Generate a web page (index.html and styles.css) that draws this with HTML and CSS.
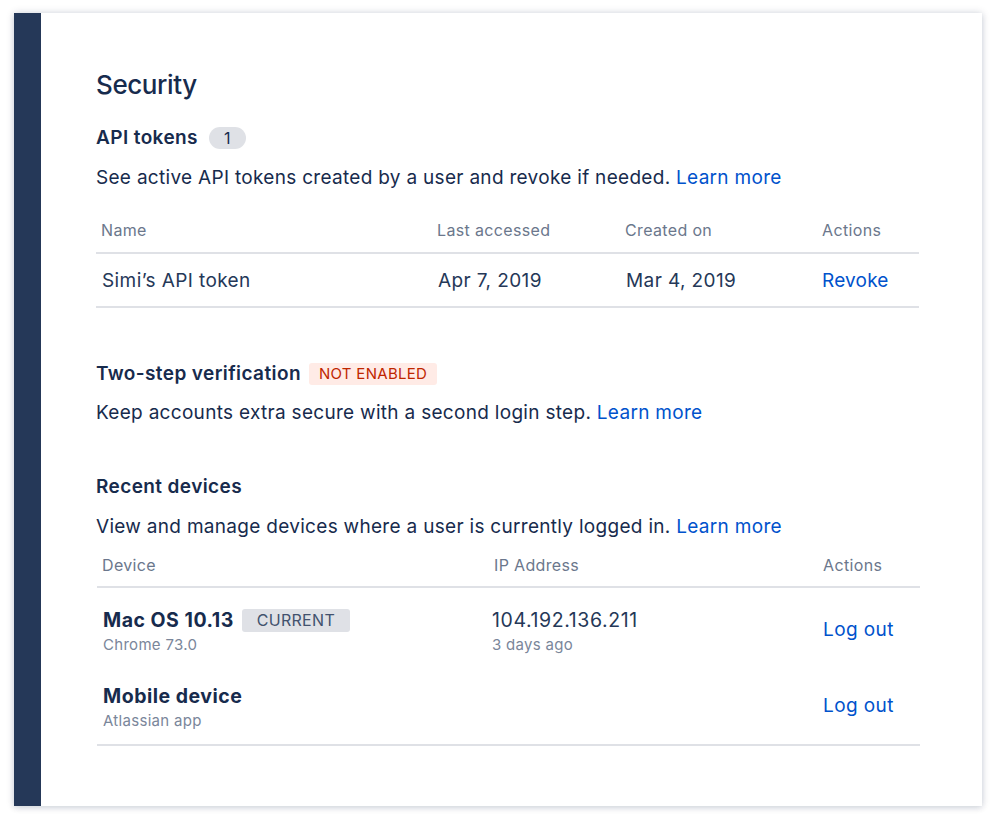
FILE: index.html
```html
<!DOCTYPE html>
<html lang="en">
<head>
<meta charset="utf-8">
<title>Security</title>
<link rel="stylesheet" href="styles.css">
</head>
<body>
<div class="frame">
  <div class="nav"></div>
  <main class="content">
    <h1 class="title">Security</h1>

    <section class="section">
      <h2 class="heading">API tokens <span class="badge">1</span></h2>
      <p class="desc">See active API tokens created by a user and revoke if needed. <a class="link" href="#">Learn more</a></p>
      <div class="table tokens">
        <div class="th">Name</div>
        <div class="th">Last accessed</div>
        <div class="th">Created on</div>
        <div class="th">Actions</div>
        <div class="td">Simi’s API token</div>
        <div class="td">Apr 7, 2019</div>
        <div class="td">Mar 4, 2019</div>
        <div class="td"><a class="link" href="#">Revoke</a></div>
      </div>
    </section>

    <section class="section two-step">
      <h2 class="heading">Two-step verification <span class="lozenge danger">NOT ENABLED</span></h2>
      <p class="desc">Keep accounts extra secure with a second login step. <a class="link" href="#">Learn more</a></p>
    </section>

    <section class="section devices-section">
      <h2 class="heading">Recent devices</h2>
      <p class="desc">View and manage devices where a user is currently logged in. <a class="link" href="#">Learn more</a></p>
      <div class="devices">
        <div class="dhead">
          <div class="th">Device</div>
          <div class="th">IP Address</div>
          <div class="th">Actions</div>
        </div>
        <div class="dbody">
          <div class="drow first">
            <div class="dcell">
              <div class="dname">Mac OS 10.13 <span class="lozenge neutral">CURRENT</span></div>
              <div class="dsub">Chrome 73.0</div>
            </div>
            <div class="dcell ipcell">
              <div class="dip">104.192.136.211</div>
              <div class="dsub">3 days ago</div>
            </div>
            <div class="dcell action"><a class="link" href="#">Log out</a></div>
          </div>
          <div class="drow last">
            <div class="dcell">
              <div class="dname">Mobile device</div>
              <div class="dsub">Atlassian app</div>
            </div>
            <div class="dcell"></div>
            <div class="dcell action"><a class="link" href="#">Log out</a></div>
          </div>
        </div>
      </div>
    </section>
  </main>
</div>
</body>
</html>
```

FILE: styles.css
```css
* { box-sizing: border-box; }
html, body { margin: 0; padding: 0; background: #ffffff; }
body {
  font-family: "Inter", "Liberation Sans", sans-serif;
  color: #172b4d;
  width: 999px;
  height: 823px;
  overflow: hidden;
}
.frame {
  margin: 13px 0 0 14px;
  width: 968px;
  height: 793px;
  display: flex;
  background: #ffffff;
  box-shadow: 0 0 8px rgba(9, 30, 66, 0.16), 0 2px 6px rgba(9, 30, 66, 0.10);
}
.nav {
  width: 27px;
  flex: none;
  background: #253858;
}
.content {
  flex: 1;
  padding: 55px 0 0 55px;
  letter-spacing: 0.3px;
}
.title {
  margin: 0;
  font-size: 26px;
  line-height: 33px;
  font-weight: 500;
  letter-spacing: -0.4px;
}
.heading {
  margin: 25px 0 0;
  font-size: 19px;
  line-height: 24px;
  font-weight: 600;
  letter-spacing: 0.4px;
  display: flex;
  align-items: center;
  gap: 8px;
}
.badge {
  display: inline-block;
  background: #dfe1e6;
  color: #172b4d;
  font-weight: 400;
  font-size: 16px;
  line-height: 22px;
  height: 22px;
  min-width: 37px;
  padding: 0 8px;
  border-radius: 11px;
  text-align: center;
  margin-left: 3px;
}
.desc {
  margin: 16px 0 0;
  font-size: 19px;
  line-height: 24px;
  font-weight: 400;
  letter-spacing: 0.3px;
}
.link {
  color: #0052cc;
  text-decoration: none;
}
.table.tokens {
  width: 823px;
  margin-top: 30px;
  display: grid;
  grid-template-columns: 336px 188px 197px 1fr;
}
.th {
  font-size: 16px;
  line-height: 20px;
  color: #6b778c;
  padding: 0 5px 12px;
  border-bottom: 2px solid #dfe1e6;
  letter-spacing: 0.35px;
}
.td {
  font-size: 19px;
  line-height: 24px;
  padding: 15px 6px 13px;
  border-bottom: 2px solid #dfe1e6;
  color: #172b4d;
  letter-spacing: 0.4px;
}
.tokens .td { color: #253858; }
.tokens .td:first-child { color: #172b4d; }
.tokens .td:last-child { padding-left: 5px; letter-spacing: 0.2px; }
.two-step .heading { margin-top: 54px; gap: 8px; }
.two-step .desc { margin-top: 15px; }
.lozenge {
  display: inline-block;
  font-size: 15px;
  line-height: 22px;
  height: 22px;
  padding: 0 10px;
  border-radius: 3px;
  font-weight: 400;
  letter-spacing: 0.3px;
}
.lozenge.danger {
  background: #ffebe6;
  color: #bf2600;
}
.lozenge.neutral {
  background: #dfe1e6;
  color: #42526e;
  font-size: 16px;
  height: 23px;
  line-height: 23px;
  padding: 0 15px;
  margin-left: 4px;
  letter-spacing: 0.3px;
}
.devices-section .heading { margin-top: 50px; }
.devices {
  width: 823px;
  margin-top: 16px;
  margin-left: 1px;
}
.dhead, .drow {
  display: grid;
  grid-template-columns: 392px 327px 1fr;
}
.dhead .th { padding: 0 5px 11px; }
.dhead .th:nth-child(3) { padding-left: 7px; }
.dbody {
  padding-top: 6px;
  border-bottom: 2px solid #dfe1e6;
}
.drow { padding: 14px 0 15px; }
.drow.last { padding-bottom: 13px; }
.dcell { padding: 0 5px 0 6px; }
.dcell.ipcell { padding-left: 3px; }
.dcell.action {
  display: flex;
  align-items: center;
  font-size: 19px;
  padding-bottom: 4px;
  padding-left: 7px;
  letter-spacing: 0.4px;
}
.dname {
  font-size: 19.5px;
  line-height: 24px;
  font-weight: 700;
  letter-spacing: 0.5px;
  display: flex;
  align-items: center;
  gap: 4px;
}
.dip {
  font-size: 19.5px;
  line-height: 24px;
  color: #253858;
  letter-spacing: 0.6px;
}
.dsub {
  margin-top: 3px;
  font-size: 15px;
  line-height: 20px;
  color: #7a869a;
  letter-spacing: 0.3px;
}
```
